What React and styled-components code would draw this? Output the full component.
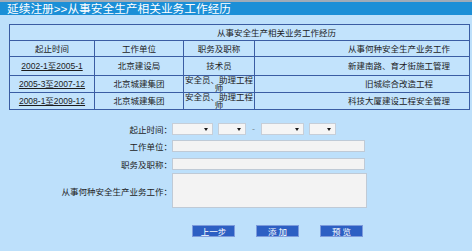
import React from "react";
import styled, { createGlobalStyle } from "styled-components";

const rows = [
    { period: "2002-1至2005-1", unit: "北京建设局", title: "技术员", work: "新建南路、育才街施工管理", h: 19 },
    { period: "2005-3至2007-12", unit: "北京城建集团", title: "安全员、助理工程师", work: "旧城综合改造工程", h: 17 },
    { period: "2008-1至2009-12", unit: "北京城建集团", title: "安全员、助理工程师", work: "科技大厦建设工程安全管理", h: 16 },
];

const App = () => {
    return (
        <Page>
            <GlobalStyle />
            <TitleBar>延续注册&gt;&gt;从事安全生产相关业务工作经历</TitleBar>

            <HistoryTable>
                <colgroup>
                    <Col width={85} />
                    <Col width={89} />
                    <Col width={71} />
                    <Col width={215} />
                </colgroup>
                <tbody>
                    <tr>
                        <Cell colSpan={4} wide height={16}>
                            从事安全生产相关业务工作经历
                        </Cell>
                    </tr>
                    <tr>
                        <Cell height={16}>起止时间</Cell>
                        <Cell>工作单位</Cell>
                        <Cell>职务及职称</Cell>
                        <Cell wide>从事何种安全生产业务工作</Cell>
                    </tr>
                    {rows.map(r => (
                        <tr key={r.period}>
                            <Cell height={r.h}>
                                <PeriodLink href="#">{r.period}</PeriodLink>
                            </Cell>
                            <Cell>{r.unit}</Cell>
                            <Cell>{r.title}</Cell>
                            <Cell wide>{r.work}</Cell>
                        </tr>
                    ))}
                </tbody>
            </HistoryTable>

            <Form>
                <FormRow top={13}>
                    <Label>起止时间：</Label>
                    <Select width={41} />
                    <Select width={28} />
                    <Dash>-</Dash>
                    <Select width={43} />
                    <Select width={27} />
                </FormRow>
                <FormRow top={5}>
                    <Label>工作单位：</Label>
                    <TextInput />
                </FormRow>
                <FormRow top={6}>
                    <Label>职务及职称：</Label>
                    <TextInput />
                </FormRow>
                <FormRow top={3}>
                    <Label>从事何种安全生产业务工作：</Label>
                    <TextArea />
                </FormRow>
            </Form>

            <ButtonBar>
                <Button>上一步</Button>
                <Button>添 加</Button>
                <Button>预 览</Button>
            </ButtonBar>
        </Page>
    );
};

export default App;

const GlobalStyle = createGlobalStyle`
    html, body {
        margin: 0;
        padding: 0;
        background: #bde0fb;
    }
    body {
        font-family: "Liberation Sans", "Noto Sans CJK SC", sans-serif;
        color: #1c1c1c;
    }
`;

const Page = styled.div`
    width: 472px;
    height: 251px;
    overflow: hidden;
    background: #bde0fb;
    border-top: 2px solid #9eabb8;
    box-sizing: border-box;
`;

const TitleBar = styled.div`
    height: 13px;
    line-height: 13px;
    padding-left: 7px;
    background: #1b8fd7;
    color: #ffffff;
    font-size: 11.7px;
    white-space: nowrap;
`;

const HistoryTable = styled.table`
    margin: 9px 0 0 9px;
    width: 460px;
    border-collapse: collapse;
    table-layout: fixed;
    border: 1px solid #3a5da3;
    background: #c2e3fc;
`;

const Col = styled.col`
    width: ${({ width }) => width}px;
`;

const Cell = styled.td`
    border: 1px solid #3a5da3;
    padding: 0 0 0 ${({ wide }) => (wide ? "74px" : "0")};
    height: ${({ height }) => (height ? `${height - 1}px` : "auto")};
    text-align: center;
    vertical-align: middle;
    font-size: 8.5px;
    line-height: 8px;
    overflow: hidden;
`;

const PeriodLink = styled.a`
    color: #1c1c1c;
    text-decoration: underline;
    white-space: nowrap;
`;

const Form = styled.div`
    display: flex;
    flex-direction: column;
`;

const FormRow = styled.div`
    display: flex;
    align-items: center;
    gap: 5px;
    margin-top: ${({ top }) => top}px;
`;

const Label = styled.div`
    width: 172px;
    text-align: right;
    font-size: 8.5px;
    white-space: nowrap;
    margin-right: -5px;
    flex-shrink: 0;
`;

const Select = styled.div`
    position: relative;
    width: ${({ width }) => width}px;
    height: 12px;
    box-sizing: border-box;
    background: #f5f5f5;
    border: 1px solid #c6ced8;
    &::after {
        content: "";
        position: absolute;
        right: 4px;
        top: 4px;
        border-left: 2.5px solid transparent;
        border-right: 2.5px solid transparent;
        border-top: 3px solid #1a1a1a;
    }
`;

const Dash = styled.span`
    font-size: 9px;
    color: #7a8c9c;
    margin: 0 1px;
`;

const TextInput = styled.div`
    width: 193px;
    height: 12px;
    box-sizing: border-box;
    background: #f3f3f3;
    border: 1px solid #bfcad6;
`;

const TextArea = styled.div`
    width: 195px;
    height: 35px;
    box-sizing: border-box;
    background: #f3f3f3;
    border: 1px solid #bfcad6;
`;

const ButtonBar = styled.div`
    display: flex;
    gap: 21px;
    margin: 17px 0 0 192px;
`;

const Button = styled.button`
    width: 43px;
    height: 12px;
    padding: 0;
    box-sizing: border-box;
    background: #2d5fc3;
    border: 1px solid #7d9bdc;
    color: #ffffff;
    font-family: "Noto Sans CJK SC", sans-serif;
    font-size: 8.5px;
    line-height: 10px;
    white-space: pre;
    cursor: pointer;
`;
